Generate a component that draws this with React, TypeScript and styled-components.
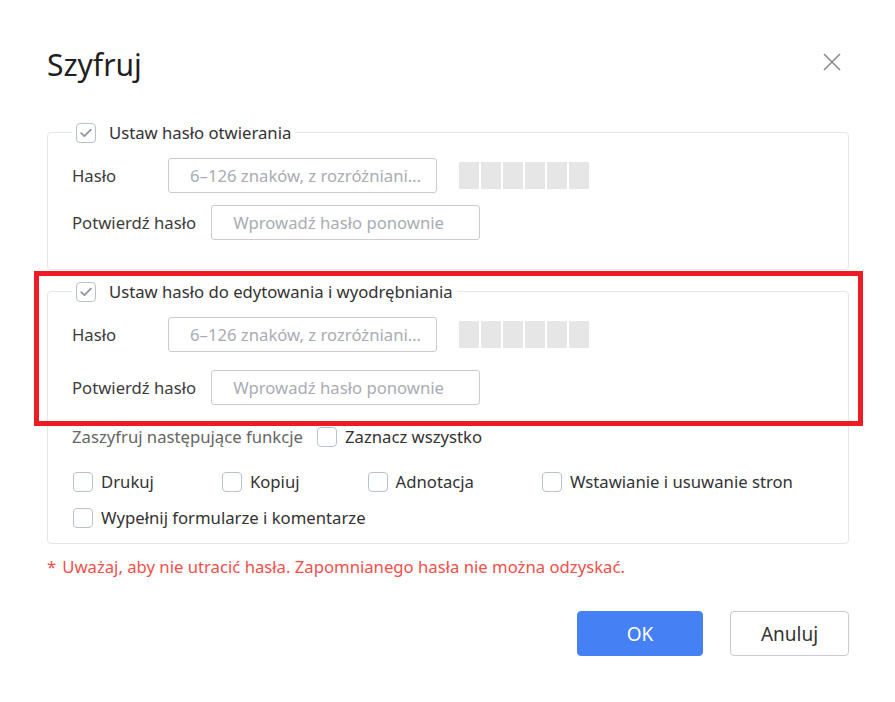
import React from "react";
import styled, { createGlobalStyle } from "styled-components";

const GlobalStyle = createGlobalStyle`
  html, body {
    margin: 0;
    padding: 0;
    background: #ffffff;
  }
  body {
    font-family: "Noto Sans", "Open Sans", Arial, sans-serif;
    color: #333333;
  }
  * {
    box-sizing: border-box;
  }
`;

const TEXT = "16.7px";

export const Dialog = styled.div`
  position: relative;
  width: 895px;
  height: 702px;
  padding: 46px 46px 0 47px;
  background: #ffffff;
`;

export const Header = styled.div`
  display: flex;
  align-items: center;
  justify-content: space-between;
  padding-right: 8px;
`;

export const Title = styled.h1`
  margin: 0;
  font-size: 30px;
  line-height: 38px;
  font-weight: 400;
  color: #1f1f1f;
`;

export const CloseButton = styled.button`
  display: flex;
  width: 18px;
  height: 18px;
  margin-bottom: 6px;
  padding: 0;
  border: none;
  background: transparent;
  cursor: pointer;
`;

export const Section = styled.fieldset<{ $top: number; $bottom: number }>`
  margin: ${({ $top }) => $top}px 0 0 0;
  padding: 14px 24px ${({ $bottom }) => $bottom}px 24px;
  border: 1px solid #e6e6e6;
  border-radius: 4px;
  min-width: 0;
`;

export const Legend = styled.legend`
  padding: 0 4px;
  line-height: 22px;
`;

export const Rows = styled.div<{ $gap: number }>`
  display: flex;
  flex-direction: column;
  gap: ${({ $gap }) => $gap}px;
`;

export const Row = styled.div`
  display: flex;
  align-items: center;
`;

export const Label = styled.label`
  min-width: 81px;
  margin-right: 15px;
  font-size: ${TEXT};
  color: #3c3c3c;
  white-space: nowrap;
`;

export const Input = styled.input`
  width: 269px;
  height: 35px;
  padding: 0 10px 0 21px;
  border: 1px solid #cccccc;
  border-radius: 3px;
  font-family: inherit;
  font-size: ${TEXT};
  color: #333333;
  outline: none;
  text-overflow: ellipsis;

  &::placeholder {
    color: #a9acb4;
  }
`;

export const Strength = styled.div`
  display: flex;
  gap: 2px;
  margin-left: 22px;
`;

export const StrengthBar = styled.span<{ $on?: boolean }>`
  width: 20px;
  height: 27px;
  background: ${({ $on }) => ($on ? "#4581f5" : "#e6e6e6")};
`;

export const BoxWrap = styled.label<{ $gap: number }>`
  display: inline-flex;
  align-items: center;
  gap: ${({ $gap }) => $gap}px;
  font-size: ${TEXT};
  line-height: 22px;
  color: #333333;
  white-space: nowrap;
  cursor: pointer;
`;

export const Box = styled.span`
  display: inline-flex;
  align-items: center;
  justify-content: center;
  width: 20px;
  height: 20px;
  flex: none;
  border: 1.5px solid #b9c0d0;
  border-radius: 4px;
  background: #ffffff;
`;

export const Permissions = styled.div`
  margin-top: 21px;
`;

export const PermHead = styled.div`
  display: flex;
  align-items: center;
  gap: 14px;
  font-size: ${TEXT};
  line-height: 22px;
  color: #666666;
`;

export const PermGrid = styled.div`
  display: flex;
  flex-wrap: wrap;
  column-gap: 68px;
  row-gap: 14px;
  margin-top: 23px;
  padding-left: 1px;
`;

export const Warning = styled.p`
  margin: 12px 0 0;
  font-size: ${TEXT};
  line-height: 22px;
  color: #f0504b;

  span {
    margin-right: 6px;
  }
`;

export const Footer = styled.div`
  display: flex;
  justify-content: flex-end;
  gap: 27px;
  margin-top: 33px;
`;

export const Button = styled.button<{ $primary?: boolean }>`
  height: 45px;
  width: ${({ $primary }) => ($primary ? "126px" : "119px")};
  border-radius: 4px;
  border: 1px solid ${({ $primary }) => ($primary ? "#4581f5" : "#c6cbd5")};
  background: ${({ $primary }) => ($primary ? "#4581f5" : "#ffffff")};
  color: ${({ $primary }) => ($primary ? "#ffffff" : "#333333")};
  font-family: inherit;
  font-size: 19px;
  cursor: pointer;
`;

export const Highlight = styled.div`
  position: absolute;
  left: 34px;
  top: 271px;
  width: 829px;
  height: 155px;
  border: 5px solid #ed1c24;
  pointer-events: none;
`;

const Check = ({
  checked,
  gap = 8,
  children,
}: {
  checked?: boolean;
  gap?: number;
  children: React.ReactNode;
}) => (
  <BoxWrap $gap={gap}>
    <Box>
      {checked && (
        <svg width="12" height="10" viewBox="0 0 12 10" fill="none">
          <path d="M1.2 5.2 L4.4 8.2 L10.8 1.6" stroke="#8f96a6" strokeWidth="1.8" strokeLinecap="round" strokeLinejoin="round" />
        </svg>
      )}
    </Box>
    {children}
  </BoxWrap>
);

const Meter = () => (
  <Strength>
    {Array.from({ length: 6 }).map((_, i) => (
      <StrengthBar key={i} />
    ))}
  </Strength>
);

const PasswordFields = () => (
  <>
    <Row>
      <Label>Hasło</Label>
      <Input type="password" placeholder="6–126 znaków, z rozróżniani…" />
      <Meter />
    </Row>
    <Row>
      <Label>Potwierdź hasło</Label>
      <Input type="password" placeholder="Wprowadź hasło ponownie" />
    </Row>
  </>
);

const permissions = ["Drukuj", "Kopiuj", "Adnotacja", "Wstawianie i usuwanie stron", "Wypełnij formularze i komentarze"];

export default function App() {
  return (
    <>
      <GlobalStyle />
      <Dialog>
        <Header>
          <Title>Szyfruj</Title>
          <CloseButton aria-label="Zamknij">
            <svg width="18" height="18" viewBox="0 0 18 18" fill="none">
              <path d="M1 1 L17 17 M17 1 L1 17" stroke="#8a8a8a" strokeWidth="1.6" />
            </svg>
          </CloseButton>
        </Header>

        <Section $top={37} $bottom={29}>
          <Legend>
            <Check checked gap={13}>Ustaw hasło otwierania</Check>
          </Legend>
          <Rows $gap={12}>
            <PasswordFields />
          </Rows>
        </Section>

        <Section $top={10} $bottom={14}>
          <Legend>
            <Check checked gap={13}>Ustaw hasło do edytowania i wyodrębniania</Check>
          </Legend>
          <Rows $gap={18}>
            <PasswordFields />
          </Rows>
          <Permissions>
            <PermHead>
              Zaszyfruj następujące funkcje
              <Check>Zaznacz wszystko</Check>
            </PermHead>
            <PermGrid>
              {permissions.map((p) => (
                <Check key={p}>{p}</Check>
              ))}
            </PermGrid>
          </Permissions>
        </Section>

        <Warning>
          <span>*</span>Uważaj, aby nie utracić hasła. Zapomnianego hasła nie można odzyskać.
        </Warning>

        <Footer>
          <Button $primary>OK</Button>
          <Button>Anuluj</Button>
        </Footer>

        <Highlight />
      </Dialog>
    </>
  );
}
